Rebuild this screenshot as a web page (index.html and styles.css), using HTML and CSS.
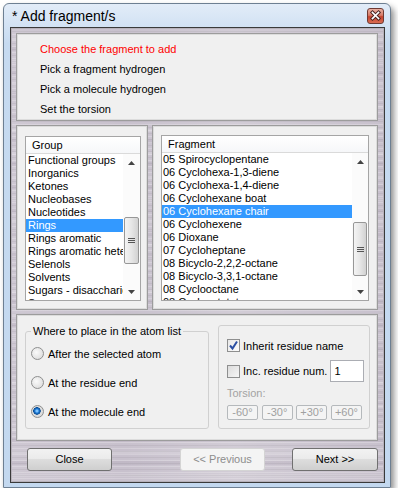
FILE: index.html
```html
<!DOCTYPE html>
<html>

<head>
    <title>Add fragment/s</title>
    <link rel="stylesheet" href="styles.css">
</head>

<body>
    <div class="window">
        <div class="titlebar">
            <span class="title">* Add fragment/s</span>
            <div class="close">
                <svg width="17" height="16" viewBox="0 0 17 16">
                    <path d="M5.5 4.5 L11.5 10.5 M11.5 4.5 L5.5 10.5" stroke="#4a2520" stroke-width="3.6" stroke-linecap="square" />
                    <path d="M5.5 4.5 L11.5 10.5 M11.5 4.5 L5.5 10.5" stroke="#ffffff" stroke-width="1.7" stroke-linecap="square" />
                </svg>
            </div>
        </div>

        <div class="client">
            <div class="panel steps">
                <div class="step current">Choose the fragment to add</div>
                <div class="step">Pick a fragment hydrogen</div>
                <div class="step">Pick a molecule hydrogen</div>
                <div class="step">Set the torsion</div>
            </div>

            <div class="lists">
                <div class="panel group-panel">
                    <div class="listbox">
                        <div class="list-header">Group</div>
                        <div class="list-body">
                            <div class="items">
                                <div class="item">Functional groups</div>
                                <div class="item">Inorganics</div>
                                <div class="item">Ketones</div>
                                <div class="item">Nucleobases</div>
                                <div class="item">Nucleotides</div>
                                <div class="item selected">Rings</div>
                                <div class="item">Rings aromatic</div>
                                <div class="item">Rings aromatic heterocycles</div>
                                <div class="item">Selenols</div>
                                <div class="item">Solvents</div>
                                <div class="item">Sugars - disaccharides</div>
                                <div class="item">Sugars - monosaccharides</div>
                            </div>
                            <div class="scrollbar">
                                <div class="arrow">
                                    <svg width="7" height="4" viewBox="0 0 7 4"><polygon points="0,4 3.5,0 7,4" fill="#444" /></svg>
                                </div>
                                <div class="track">
                                    <div class="thumb" style="margin-top: 46px; height: 47px;"><span class="grip"></span></div>
                                </div>
                                <div class="arrow">
                                    <svg width="7" height="4" viewBox="0 0 7 4"><polygon points="0,0 3.5,4 7,0" fill="#444" /></svg>
                                </div>
                            </div>
                        </div>
                    </div>
                </div>

                <div class="panel fragment-panel">
                    <div class="listbox">
                        <div class="list-header">Fragment</div>
                        <div class="list-body">
                            <div class="items">
                                <div class="item">05 Spirocyclopentane</div>
                                <div class="item">06 Cyclohexa-1,3-diene</div>
                                <div class="item">06 Cyclohexa-1,4-diene</div>
                                <div class="item">06 Cyclohexane boat</div>
                                <div class="item selected">06 Cyclohexane chair</div>
                                <div class="item">06 Cyclohexene</div>
                                <div class="item">06 Dioxane</div>
                                <div class="item">07 Cycloheptane</div>
                                <div class="item">08 Bicyclo-2,2,2-octane</div>
                                <div class="item">08 Bicyclo-3,3,1-octane</div>
                                <div class="item">08 Cyclooctane</div>
                                <div class="item">08 Cyclooctatetraene</div>
                            </div>
                            <div class="scrollbar">
                                <div class="arrow">
                                    <svg width="7" height="4" viewBox="0 0 7 4"><polygon points="0,4 3.5,0 7,4" fill="#444" /></svg>
                                </div>
                                <div class="track">
                                    <div class="thumb" style="margin-top: 52px; height: 54px;"><span class="grip"></span></div>
                                </div>
                                <div class="arrow">
                                    <svg width="7" height="4" viewBox="0 0 7 4"><polygon points="0,0 3.5,4 7,0" fill="#444" /></svg>
                                </div>
                            </div>
                        </div>
                    </div>
                </div>
            </div>

            <div class="panel options">
                <fieldset class="groupbox place">
                    <legend>Where to place in the atom list</legend>
                    <div class="radio-row"><span class="radio"></span>After the selected atom</div>
                    <div class="radio-row"><span class="radio"></span>At the residue end</div>
                    <div class="radio-row"><span class="radio checked"></span>At the molecule end</div>
                </fieldset>

                <div class="groupbox residue">
                    <div class="check-row">
                        <span class="checkbox checked">
                            <svg width="11" height="11" viewBox="0 0 11 11"><path d="M2 5.5 L4.5 8.5 L9 1.5" fill="none" stroke="#2b4fa3" stroke-width="2" /></svg>
                        </span>
                        Inherit residue name
                    </div>
                    <div class="check-row num-row">
                        <span class="checkbox"></span>
                        Inc. residue num.
                        <div class="textbox">1</div>
                    </div>
                    <div class="torsion-label">Torsion:</div>
                    <div class="torsion-buttons">
                        <div class="small-btn">-60°</div>
                        <div class="small-btn">-30°</div>
                        <div class="small-btn">+30°</div>
                        <div class="small-btn">+60°</div>
                    </div>
                </div>
            </div>

            <div class="buttons">
                <div class="btn close-btn">Close</div>
                <div class="btn prev-btn disabled">&lt;&lt; Previous</div>
                <div class="btn next-btn">Next &gt;&gt;</div>
            </div>
        </div>
    </div>
</body>

</html>
```

FILE: styles.css
```css
* {
    box-sizing: border-box;
}

body {
    margin: 0;
    background: #ffffff;
    font-family: "Liberation Sans", Arial, sans-serif;
    font-size: 11px;
    color: #000000;
}

.window {
    margin: 3px 0 0 3px;
    width: 388px;
    height: 485px;
    border: 1px solid #6d7f92;
    border-radius: 6px 6px 0 0;
    background: linear-gradient(#e2ecf8, #c6daf0 40px, #c3d8ef);
    box-shadow: 3px 4px 6px rgba(0, 0, 0, 0.45);
    display: flex;
    flex-direction: column;
    padding: 0 5px 4px 6px;
}

.titlebar {
    height: 23px;
    display: flex;
    align-items: flex-start;
}

.title {
    font-size: 14px;
    line-height: 24px;
    padding-left: 2px;
    flex: 1;
}

.close {
    width: 17px;
    height: 16px;
    margin-top: 4px;
    margin-right: 1px;
    border: 1px solid #6e3a33;
    border-radius: 3px;
    background: linear-gradient(#eab0a2, #d67a66 45%, #c5422e 55%, #d86c52);
}

.close svg {
    display: block;
    margin: -1px 0 0 -1px;
}

.client {
    flex: 1;
    border: 1px solid #3a3a3a;
    padding: 5px 6px 0 5px;
    background-color: #c8c1cd;
    background-image:
        repeating-linear-gradient(180deg, rgba(255, 255, 255, 0.22) 0 1px, transparent 1px 3px, rgba(0, 0, 0, 0.05) 3px 4px, transparent 4px 6px),
        repeating-linear-gradient(180deg, transparent 0 9px, rgba(255, 255, 255, 0.15) 9px 12px, transparent 12px 19px, rgba(80, 60, 90, 0.06) 19px 23px),
        linear-gradient(90deg, rgba(255, 255, 255, 0.12), transparent 30%, rgba(255, 255, 255, 0.18) 60%, transparent);
    box-shadow: inset 0 0 0 1px #b7b2bb;
}

.panel {
    background: #f0f0f0;
    border: 1px solid #9c9c9c;
    box-shadow: inset 0 0 0 1px #dcdcdc;
}

.steps {
    height: 88px;
    padding: 5px 0 0 23px;
}

.step {
    line-height: 20px;
}

.step.current {
    color: #ff0000;
}

.lists {
    display: flex;
    gap: 4px;
    margin-top: 4px;
    height: 185px;
}

.group-panel {
    width: 132px;
    padding: 10px 6px 8px 8px;
}

.fragment-panel {
    flex: 1;
    padding: 9px 8px 8px 8px;
}

.listbox {
    height: 100%;
    border: 1px solid #a5a5a5;
    background: #ffffff;
    display: flex;
    flex-direction: column;
}

.fragment-panel .listbox {
    height: 166px;
}

.list-header {
    height: 17px;
    line-height: 17px;
    padding-left: 6px;
    border-bottom: 1px solid #dadada;
    background: linear-gradient(#ffffff, #f6f7f9);
}

.list-body {
    flex: 1;
    display: flex;
    overflow: hidden;
}

.items {
    flex: 1;
    overflow: hidden;
}

.item {
    height: 13px;
    line-height: 13px;
    padding-left: 2px;
    white-space: nowrap;
}

.fragment-panel .item {
    padding-left: 1px;
}

.item.selected {
    background: #3399ff;
    color: #ffffff;
}

.scrollbar {
    width: 17px;
    display: flex;
    flex-direction: column;
    background: #fbfbfb;
}

.fragment-panel .scrollbar {
    width: 16px;
}

.arrow {
    height: 17px;
    display: flex;
    align-items: center;
    justify-content: center;
}

.track {
    flex: 1;
    padding: 0 1px;
}

.thumb {
    border: 1px solid #979797;
    border-radius: 2px;
    background: linear-gradient(90deg, #f4f4f4, #e6e6e6 50%, #d2d2d2);
    display: flex;
    align-items: center;
    justify-content: center;
}

.grip {
    width: 7px;
    height: 5px;
    border-top: 1px solid #555;
    border-bottom: 1px solid #555;
    background: linear-gradient(#555, #555) center / 100% 1px no-repeat;
}

.options {
    margin-top: 4px;
    height: 127px;
    display: flex;
    align-items: flex-start;
    gap: 9px;
    padding: 10px 7px 0 8px;
}

.groupbox {
    border: 1px solid #d0d0d0;
    border-radius: 3px;
    height: 104px;
}

.place {
    width: 184px;
    margin: 0;
    padding: 4px 0 0 5px;
}

.place legend {
    padding: 0 2px;
    line-height: 12px;
}

.radio-row {
    display: flex;
    align-items: center;
    gap: 4px;
    height: 13px;
    margin-top: 16px;
}

.radio-row:first-of-type {
    margin-top: 6px;
}

.radio {
    width: 13px;
    height: 13px;
    border-radius: 50%;
    border: 1px solid #8e8f8f;
    background: radial-gradient(circle at 40% 40%, #fafafa, #d6d6d6);
}

.radio.checked {
    background: radial-gradient(circle at 45% 45%, #7cc4ff 0 1px, #1f7ad6 2px, #0c4f95 3.5px, #e0e0e0 4px, #d0d0d0);
}

.residue {
    width: 152px;
    padding: 13px 6px 0 8px;
}

.check-row {
    display: flex;
    align-items: center;
    gap: 3px;
    height: 13px;
    white-space: nowrap;
}

.checkbox {
    width: 13px;
    height: 13px;
    flex: none;
    border: 1px solid #8e8f8f;
    background: linear-gradient(135deg, #dcdcdc, #f6f6f6);
    display: flex;
    align-items: center;
    justify-content: center;
}

.checkbox.checked {
    background: linear-gradient(135deg, #e8e8e8, #fbfbfb);
}

.num-row {
    height: 22px;
    margin-top: 8px;
}

.textbox {
    margin-left: auto;
    width: 34px;
    height: 22px;
    flex: none;
    border: 1px solid #abadb3;
    background: #ffffff;
    padding-left: 3px;
    line-height: 20px;
}

.torsion-label {
    color: #a3a3a3;
    line-height: 12px;
    margin-top: 5px;
}

.torsion-buttons {
    display: flex;
    justify-content: space-between;
    width: 135px;
    margin-top: 6px;
}

.small-btn {
    width: 31px;
    height: 15px;
    line-height: 13px;
    text-align: center;
    border: 1px solid #b5b9bc;
    border-radius: 2px;
    background: #f4f4f4;
    color: #a0a0a0;
}

.buttons {
    display: flex;
    margin-top: 7px;
    padding-left: 11px;
}

.btn {
    width: 86px;
    height: 23px;
    line-height: 21px;
    text-align: center;
    border: 1px solid #707070;
    border-radius: 3px;
    background: linear-gradient(#f2f2f2, #ebebeb 45%, #dddddd 50%, #cfcfcf);
}

.prev-btn {
    margin-left: 68px;
}

.next-btn {
    margin-left: 27px;
    width: 87px;
}

.btn.disabled {
    border-color: #d4d4d4;
    background: #f4f4f4;
    color: #8d8d8d;
}
```
